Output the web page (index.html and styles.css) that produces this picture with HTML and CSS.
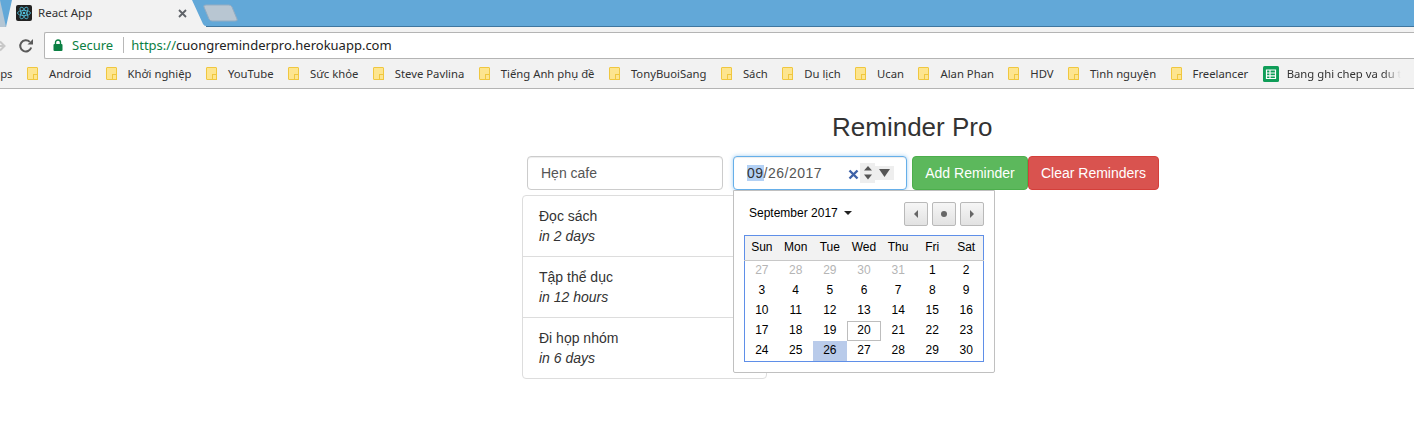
FILE: index.html
```html
<!DOCTYPE html>
<html lang="en">
<head>
    <meta charset="UTF-8">
    <meta name="viewport" content="width=device-width, initial-scale=1.0">
    <title>React App</title>
    <link rel="stylesheet" href="styles.css">
</head>
<body>
    <!-- Browser chrome -->
    <header class="chrome">
        <div class="tabstrip">
            <svg class="tab-shape" width="240" height="27" viewBox="0 0 240 27">
                <path d="M0 0 L6 27 L0 27 Z" fill="#b4c6d4"/>
                <path d="M6 27 L12 0 L192 0 L203 24 Q204 26 206 26 L206 27 Z" fill="#f2f2f2"/>
                <path d="M206 5 L229 5 Q231 5 232 7 L237 19 Q238 21 235 21 L212 21 Q210 21 209 19 L204 7 Q203 5 206 5 Z" fill="#b8c6d2" stroke="#93acc2"/>
            </svg>
            <div class="tab">
                <svg class="favicon" width="16" height="16" viewBox="0 0 16 16">
                    <rect width="16" height="16" rx="2" fill="#222"/>
                    <g fill="none" stroke="#53c1de" stroke-width=".8">
                        <ellipse cx="8" cy="8" rx="6.5" ry="2.6"/>
                        <ellipse cx="8" cy="8" rx="6.5" ry="2.6" transform="rotate(60 8 8)"/>
                        <ellipse cx="8" cy="8" rx="6.5" ry="2.6" transform="rotate(120 8 8)"/>
                    </g>
                    <circle cx="8" cy="8" r="1.3" fill="#53c1de"/>
                </svg>
                <span class="tab-title">React App</span>
                <svg class="tab-close" width="9" height="9" viewBox="0 0 9 9">
                    <path d="M1 1 L8 8 M8 1 L1 8" stroke="#5f6368" stroke-width="1.8"/>
                </svg>
            </div>
        </div>
        <div class="toolbar">
            <svg class="nav-icon forward" width="8" height="12" viewBox="0 0 8 12">
                <path d="M0 6 H6 M2 1.5 L6.5 6 L2 10.5" fill="none" stroke="#c8c8c8" stroke-width="2"/>
            </svg>
            <svg class="nav-icon reload" width="16" height="16" viewBox="0 0 16 16">
                <path d="M13.2 9.5 A5.6 5.6 0 1 1 11.8 3.9" fill="none" stroke="#5a5a5a" stroke-width="2"/>
                <path d="M9.5 6.5 H15 V1 Z" fill="#5a5a5a"/>
            </svg>
            <div class="omnibox">
                <svg class="lock" width="10" height="12" viewBox="0 0 10 12">
                    <path d="M2.5 5 V3.5 A2.5 2.5 0 0 1 7.5 3.5 V5" fill="none" stroke="#0b8043" stroke-width="1.4"/>
                    <rect x="0.5" y="5" width="9" height="7" rx="1" fill="#0b8043"/>
                </svg>
                <span class="secure">Secure</span>
                <span class="url"><span class="scheme">https://</span>cuongreminderpro.herokuapp.com</span>
            </div>
        </div>
        <div class="bookmarks">
            <span class="bookmark first"><i class="folder"></i>Apps</span>
            <span class="bookmark"><i class="folder"></i>Android</span>
            <span class="bookmark"><i class="folder"></i>Khởi nghiệp</span>
            <span class="bookmark"><i class="folder"></i>YouTube</span>
            <span class="bookmark"><i class="folder"></i>Sức khỏe</span>
            <span class="bookmark"><i class="folder"></i>Steve Pavlina</span>
            <span class="bookmark"><i class="folder"></i>Tiếng Anh phụ đề</span>
            <span class="bookmark"><i class="folder"></i>TonyBuoiSang</span>
            <span class="bookmark"><i class="folder"></i>Sách</span>
            <span class="bookmark"><i class="folder"></i>Du lịch</span>
            <span class="bookmark"><i class="folder"></i>Ucan</span>
            <span class="bookmark"><i class="folder"></i>Alan Phan</span>
            <span class="bookmark"><i class="folder"></i>HDV</span>
            <span class="bookmark"><i class="folder"></i>Tình nguyện</span>
            <span class="bookmark"><i class="folder"></i>Freelancer</span>
            <span class="bookmark last">
                <svg class="sheet" width="16" height="16" viewBox="0 0 16 16">
                    <rect width="16" height="16" rx="1.5" fill="#0f9d58"/>
                    <path d="M3.5 4 H12.5 V12.5 H3.5 Z M3.5 7 H12.5 M3.5 9.8 H12.5 M7 4 V12.5" fill="none" stroke="#fff" stroke-width="1.2"/>
                </svg>
                <span class="fade">Bang ghi chep va du thu</span>
            </span>
        </div>
    </header>

    <!-- App -->
    <main class="app">
        <h1 class="title">Reminder Pro</h1>
        <form class="reminder-form">
            <input class="form-control text-input" type="text" value="Hẹn cafe">
            <div class="date-wrap">
                <div class="form-control date-input">
                    <span class="date-value"><span class="selected-part">09</span>/26/2017</span>
                    <svg class="date-clear" width="11" height="11" viewBox="0 0 11 11">
                        <path d="M1.5 1.5 L9.5 9.5 M9.5 1.5 L1.5 9.5" stroke="#3f62a8" stroke-width="2.4"/>
                    </svg>
                    <span class="date-spin">
                        <svg width="8" height="14" viewBox="0 0 8 14">
                            <path d="M4 0 L8 4.5 H0 Z M0 8.5 H8 L4 13.5 Z" fill="#555"/>
                        </svg>
                    </span>
                    <span class="date-drop">
                        <svg width="11" height="8" viewBox="0 0 11 8"><path d="M0 0 H11 L5.5 8 Z" fill="#555"/></svg>
                    </span>
                </div>
                <div class="datepicker">
                    <div class="dp-head">
                        <span class="dp-month">September 2017<i class="caret"></i></span>
                        <div class="dp-buttons">
                            <button class="dp-btn" type="button"><i class="tri-left"></i></button>
                            <button class="dp-btn" type="button"><i class="dot"></i></button>
                            <button class="dp-btn" type="button"><i class="tri-right"></i></button>
                        </div>
                    </div>
                    <table class="dp-table">
                        <thead>
                            <tr><th>Sun</th><th>Mon</th><th>Tue</th><th>Wed</th><th>Thu</th><th>Fri</th><th>Sat</th></tr>
                        </thead>
                        <tbody>
                            <tr><td class="off">27</td><td class="off">28</td><td class="off">29</td><td class="off">30</td><td class="off">31</td><td>1</td><td>2</td></tr>
                            <tr><td>3</td><td>4</td><td>5</td><td>6</td><td>7</td><td>8</td><td>9</td></tr>
                            <tr><td>10</td><td>11</td><td>12</td><td>13</td><td>14</td><td>15</td><td>16</td></tr>
                            <tr><td>17</td><td>18</td><td>19</td><td class="today">20</td><td>21</td><td>22</td><td>23</td></tr>
                            <tr><td>24</td><td>25</td><td class="picked">26</td><td>27</td><td>28</td><td>29</td><td>30</td></tr>
                        </tbody>
                    </table>
                </div>
            </div>
            <button class="btn btn-success" type="button">Add Reminder</button>
            <button class="btn btn-danger" type="button">Clear Reminders</button>
        </form>
        <ul class="list-group">
            <li class="list-item"><div>Đọc sách</div><div><em>in 2 days</em></div></li>
            <li class="list-item"><div>Tập thể dục</div><div><em>in 12 hours</em></div></li>
            <li class="list-item"><div>Đi họp nhóm</div><div><em>in 6 days</em></div></li>
        </ul>
    </main>
</body>
</html>
```

FILE: styles.css
```css
* {
    box-sizing: border-box;
}
html, body {
    height: 100%;
}
body {
    margin: 0;
    font-family: "Liberation Sans", Arial, sans-serif;
    font-size: 14px;
    line-height: 20px;
    color: #333;
    background-color: #fff;
    overflow: hidden;
}

/* Browser chrome */
.chrome {
    font-family: "Noto Sans", "Open Sans", sans-serif;
}
.tabstrip {
    position: relative;
    height: 27px;
    background-color: #62a8d8;
    border-bottom: 1px solid #3f769f;
}
.tab-shape {
    position: absolute;
    left: 0;
    top: 0;
}
.tab {
    position: relative;
    display: flex;
    align-items: center;
    width: 189px;
    height: 26px;
    padding-left: 16px;
}
.favicon {
    margin-right: 6px;
}
.tab-title {
    flex: 1;
    font-size: 11.5px;
    color: #333;
}
.tab-close {
    margin-right: 2px;
}
.toolbar {
    display: flex;
    align-items: center;
    height: 32px;
    padding-top: 5px;
    background-color: #f2f2f2;
}
.forward {
    margin-left: -2px;
}
.reload {
    margin-left: 12px;
}
.omnibox {
    display: flex;
    align-items: center;
    flex: 1;
    height: 27px;
    margin-left: 10px;
    padding-bottom: 2px;
    border: 1px solid #b4b4b4;
    border-right: 0;
    border-radius: 2px 0 0 2px;
    background-color: #fff;
    font-size: 13px;
}
.lock {
    margin-left: 8px;
}
.secure {
    margin-left: 9px;
    padding-right: 10px;
    border-right: 1px solid #b8b8b8;
    line-height: 16px;
    color: #0b8043;
}
.url {
    margin-left: 7px;
    color: #222;
}
.scheme {
    color: #0b8043;
}
.bookmarks {
    display: flex;
    align-items: center;
    gap: 14.4px;
    height: 30px;
    background-color: #f2f2f2;
    border-bottom: 1px solid #b4b4b4;
    overflow: hidden;
    font-size: 11.3px;
    color: #333;
    white-space: nowrap;
}
.bookmark {
    display: flex;
    align-items: center;
    flex: none;
}
.bookmark.first {
    margin-left: -36px;
}
.folder {
    position: relative;
    display: block;
    width: 11px;
    height: 13px;
    margin-right: 11px;
    background-color: #fde58f;
    border: 1px solid #f0c73f;
    border-radius: 1px;
}
.folder::after {
    content: "";
    position: absolute;
    right: -1px;
    bottom: -1px;
    width: 3px;
    height: 4px;
    border: 1px solid #f0c73f;
    background-color: #fde58f;
}
.sheet {
    margin-right: 8px;
}
.fade {
    display: block;
    width: 114px;
    overflow: hidden;
    -webkit-mask-image: linear-gradient(to right, #000 85%, transparent);
    mask-image: linear-gradient(to right, #000 85%, transparent);
}

/* App */
.app {
    width: 637px;
    margin-left: 522px;
}
.title {
    margin: 20px 0 11px;
    padding-left: 310px;
    font-size: 26px;
    font-weight: 400;
    line-height: 36px;
    color: #333;
}
.reminder-form {
    display: flex;
    align-items: flex-start;
    padding-left: 5px;
}
.form-control {
    height: 34px;
    border: 1px solid #ccc;
    border-radius: 4px;
    background-color: #fff;
    font-family: inherit;
    font-size: 14px;
    color: #555;
    box-shadow: inset 0 1px 1px rgba(0, 0, 0, 0.075);
}
.text-input {
    width: 196px;
    margin-right: 10px;
    padding: 6px 13px;
}
.date-wrap {
    position: relative;
    width: 174px;
    margin-right: 5px;
}
.date-input {
    display: flex;
    align-items: center;
    padding-left: 13px;
    border-color: #66afe9;
    box-shadow: inset 0 1px 1px rgba(0, 0, 0, 0.075), 0 0 4px rgba(102, 175, 233, 0.6);
}
.date-value {
    width: 100px;
    letter-spacing: 0.5px;
}
.selected-part {
    background-color: #b3d1f5;
    color: #333;
}
.date-clear {
    margin-left: 1px;
    margin-top: 2px;
}
.date-spin {
    display: flex;
    align-items: center;
    justify-content: center;
    width: 15px;
    height: 20px;
    margin-left: 1px;
    background-color: #eee;
}
.date-drop {
    display: flex;
    align-items: center;
    justify-content: center;
    width: 19px;
    height: 14px;
    background-color: #eee;
}
.datepicker {
    position: absolute;
    left: 0;
    top: 34px;
    z-index: 2;
    width: 262px;
    height: 183px;
    padding: 10px 10px 0;
    background-color: #fff;
    border: 1px solid #c0c0c0;
    border-radius: 0 0 2px 2px;
    color: #000;
    font-size: 12px;
}
.dp-head {
    display: flex;
    align-items: center;
    justify-content: space-between;
    height: 25px;
    padding-left: 5px;
    margin-bottom: 9px;
}
.dp-month {
    display: flex;
    align-items: center;
    padding-bottom: 2px;
}
.caret {
    display: block;
    margin-left: 6px;
    border-top: 4px solid #222;
    border-left: 4px solid transparent;
    border-right: 4px solid transparent;
}
.dp-buttons {
    display: flex;
    gap: 4px;
}
.dp-btn {
    display: flex;
    align-items: center;
    justify-content: center;
    width: 24px;
    height: 24px;
    padding: 0;
    background: linear-gradient(#f6f6f6, #e2e2e2);
    border: 1px solid #b9b9b9;
    border-radius: 2px;
}
.tri-left {
    border-right: 4px solid #666;
    border-top: 4px solid transparent;
    border-bottom: 4px solid transparent;
}
.tri-right {
    border-left: 4px solid #666;
    border-top: 4px solid transparent;
    border-bottom: 4px solid transparent;
}
.dot {
    width: 6px;
    height: 6px;
    border-radius: 50%;
    background-color: #666;
}
.dp-table {
    width: 240px;
    border-collapse: collapse;
    table-layout: fixed;
    border: 1px solid #5f8fe8;
    text-align: center;
}
.dp-table th {
    height: 25px;
    padding: 0 0 2px;
    font-weight: 400;
    background-color: #f2f2f2;
    border-bottom: 1px solid #c8c8c8;
}
.dp-table td {
    height: 20px;
    padding: 0 0 2px;
    line-height: 18px;
}
.dp-table .off {
    color: #b5b5b5;
}
.dp-table .today {
    outline: 1px solid #bdbdbd;
    outline-offset: -1px;
}
.dp-table .picked {
    background-color: #b9cbea;
}
.btn {
    height: 34px;
    padding: 6px 0;
    border: 1px solid transparent;
    border-radius: 4px;
    font-family: inherit;
    font-size: 14px;
    line-height: 20px;
    color: #fff;
    white-space: nowrap;
    cursor: pointer;
}
.btn-success {
    width: 116px;
    background-color: #5cb85c;
    border-color: #4cae4c;
}
.btn-danger {
    width: 131px;
    background-color: #d9534f;
    border-color: #d43f3a;
}
.list-group {
    width: 245px;
    margin: 5px 0 0;
    padding: 0;
    list-style: none;
    background-color: #fff;
    border: 1px solid #ddd;
    border-radius: 4px;
}
.list-item {
    height: 61px;
    padding: 10px 16px;
    border-top: 1px solid #ddd;
}
.list-item:first-child {
    height: 60px;
    border-top: 0;
}
```
